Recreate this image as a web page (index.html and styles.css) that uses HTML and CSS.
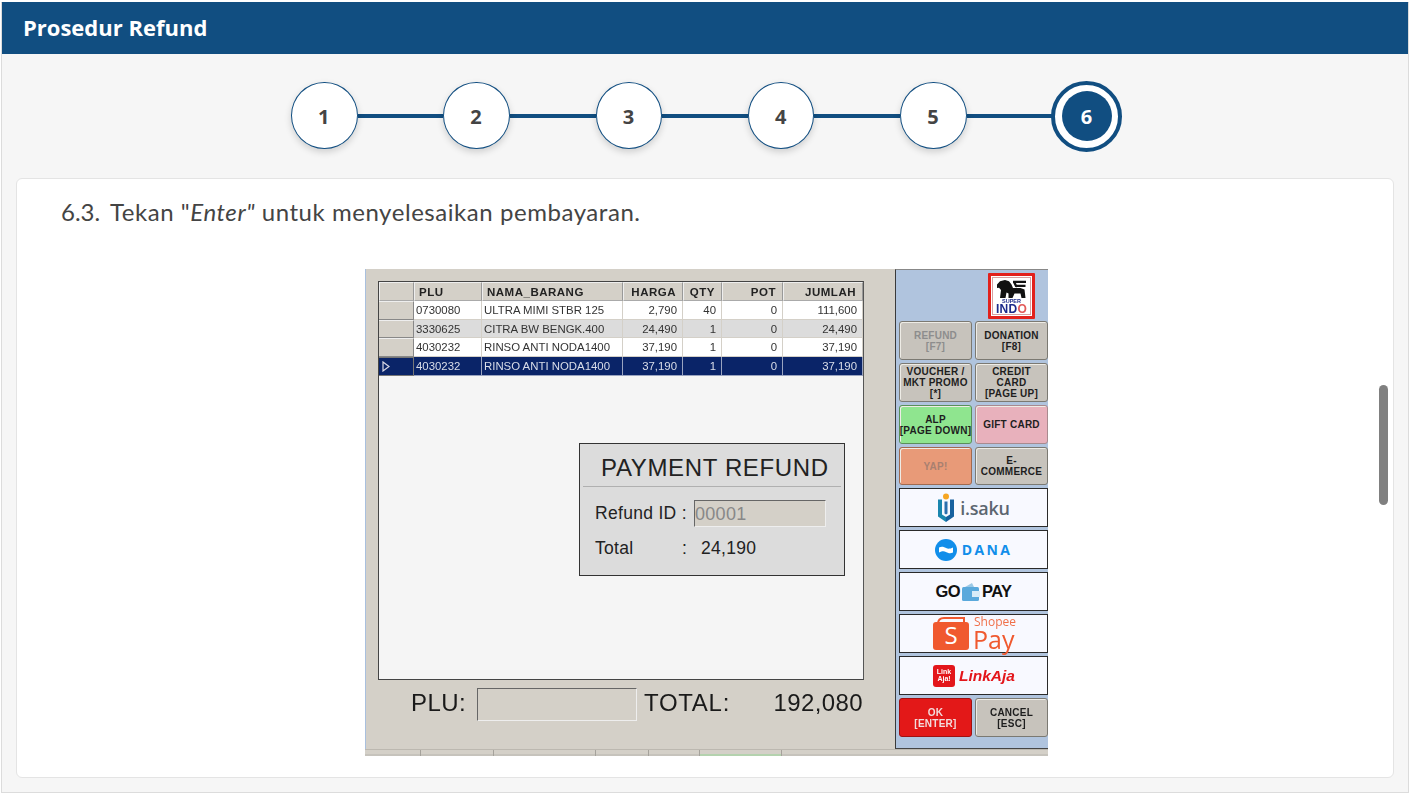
FILE: index.html
```html
<!DOCTYPE html>
<html lang="id">
<head>
<meta charset="utf-8">
<title>Prosedur Refund</title>
<link rel="stylesheet" href="styles.css">
</head>
<body>
<div class="panel">
  <header class="head">Prosedur Refund</header>
  <div class="steps">
    <div class="step">1</div><div class="link"></div>
    <div class="step">2</div><div class="link"></div>
    <div class="step">3</div><div class="link"></div>
    <div class="step">4</div><div class="link"></div>
    <div class="step">5</div><div class="link"></div>
    <div class="step current"><span>6</span></div>
  </div>
  <main class="card">
    <p class="lead"><span class="num">6.3.</span>Tekan "<em>Enter"</em> untuk menyelesaikan pembayaran.</p>
    <div class="shot">
      <div class="shot-main">
      <div class="pos">
        <div class="grid">
          <div class="row hdr">
            <div class="c ind"></div><div class="c">PLU</div><div class="c">NAMA_BARANG</div><div class="c r">HARGA</div><div class="c r">QTY</div><div class="c r">POT</div><div class="c r">JUMLAH</div>
          </div>
          <div class="row">
            <div class="c ind"></div><div class="c">0730080</div><div class="c">ULTRA MIMI STBR 125</div><div class="c r">2,790</div><div class="c r">40</div><div class="c r">0</div><div class="c r">111,600</div>
          </div>
          <div class="row alt">
            <div class="c ind"></div><div class="c">3330625</div><div class="c">CITRA BW BENGK.400</div><div class="c r">24,490</div><div class="c r">1</div><div class="c r">0</div><div class="c r">24,490</div>
          </div>
          <div class="row">
            <div class="c ind"></div><div class="c">4030232</div><div class="c">RINSO ANTI NODA1400</div><div class="c r">37,190</div><div class="c r">1</div><div class="c r">0</div><div class="c r">37,190</div>
          </div>
          <div class="row sel">
            <div class="c ind"><svg class="arrow" width="8" height="11" viewBox="0 0 8 11"><path d="M1 1l6 4.500-6 4.500z" fill="#0a2468" stroke="#d8d8e4" stroke-width="1.200"/></svg></div><div class="c">4030232</div><div class="c">RINSO ANTI NODA1400</div><div class="c r">37,190</div><div class="c r">1</div><div class="c r">0</div><div class="c r">37,190</div>
          </div>
        </div>
        <div class="dialog">
          <div class="d-title">PAYMENT REFUND</div>
          <div class="d-body">
            <div class="d-row"><span class="d-lbl">Refund ID :</span><span class="d-input">00001</span></div>
            <div class="d-row d-total"><span class="d-lbl2">Total</span><span class="d-colon">:</span><span>24,190</span></div>
          </div>
        </div>
        <div class="totals">
          <span class="t-plu">PLU:</span><span class="t-input"></span><span class="t-lbl">TOTAL:</span><span class="t-val">192,080</span>
        </div>
      </div>
      <aside class="side">
        <div class="logo-wrap">
          <div class="indo">
            <svg class="lion" width="30" height="18" viewBox="0 0 30 20" preserveAspectRatio="none"><path d="M0 5L3 1.500 8 0l4 1.500L14.500 5l1.500 4h7.500l4 1.500 1 9.500h-4l-1-5h-6l-2 5h-4v-5l-2-1-1 6H3l1-9-2-2.500-2 .5z" fill="#111"/><path d="M16 2h13M17 2l2 4.500h9.500M19 6.500l1 1" fill="none" stroke="#111" stroke-width="2.400"/></svg>
            <span class="super">SUPER</span>
            <span class="indo-t">IND<span class="indo-o">O</span></span>
          </div>
        </div>
        <div class="btns">
          <div class="btn off">REFUND<br>[F7]</div>
          <div class="btn">DONATION<br>[F8]</div>
          <div class="btn">VOUCHER /<br>MKT PROMO<br>[*]</div>
          <div class="btn">CREDIT<br>CARD<br>[PAGE UP]</div>
          <div class="btn green">ALP<br>[PAGE DOWN]</div>
          <div class="btn pink">GIFT CARD</div>
          <div class="btn salmon">YAP!</div>
          <div class="btn">E-<br>COMMERCE</div>
          <div class="pay isk">
            <svg width="18" height="30" viewBox="0 0 18 30"><circle cx="9" cy="3.500" r="3" fill="#f6a623"/><path d="M5 6.500H1v17l8 5.500v-5l-4-2.500z" fill="#1a86ae"/><path d="M13 6.500h4v17l-8 5.500v-5l4-2.500z" fill="#17619f"/><path d="M7.500 8.500h3v12l-1.500 1-1.500-1z" fill="#2a6fae"/></svg>
            <span class="isaku">i.saku</span>
          </div>
          <div class="pay dn">
            <svg width="22" height="22" viewBox="0 0 22 22"><circle cx="11" cy="11" r="11" fill="#118eea"/><path d="M4 8.500c3-1.500 5-.5 7 .5s4 1 7-.5v5c-3 1.500-5 .5-7-.5s-4-1-7 .5z" fill="#fff"/></svg>
            <span class="dana">DANA</span>
          </div>
          <div class="pay gp">
            <span class="gopay">GO</span>
            <svg width="18" height="20" viewBox="0 0 18 20"><path d="M3 5l7-4 2 4z" fill="#9cc9e6"/><rect x="0" y="5" width="17" height="14" rx="1.500" fill="#5aa9dc"/><rect x="10" y="9" width="8" height="6" fill="#d9ecf8"/></svg>
            <span class="gopay">PAY</span>
          </div>
          <div class="pay spay">
            <svg width="36" height="33" viewBox="0 0 36 33"><path d="M5 7C5 2 8 1 11 1h20v6" fill="none" stroke="#f0592f" stroke-width="2"/><rect x="0" y="5" width="36" height="28" rx="3" fill="#f0592f"/><text x="18" y="27" text-anchor="middle" class="s-letter">S</text></svg>
            <div class="spay-t"><span class="sh">Shopee</span><span class="pa">Pay</span></div>
          </div>
          <div class="pay la-pay">
            <span class="la-box">Link<br>Aja!</span><span class="la">LinkAja</span>
          </div>
          <div class="btn red">OK<br>[ENTER]</div>
          <div class="btn">CANCEL<br>[ESC]</div>
        </div>
      </aside>
      </div>
      <div class="status">
        <i class="w1"></i><i class="w2"></i><i class="w3"></i><i class="w4"></i><i class="w5"></i><i class="w6"></i><i class="w7"></i>
      </div>
    </div>
  </main>
  <div class="thumb"></div>
</div>
</body>
</html>
```

FILE: styles.css
```css
* { box-sizing: border-box; }
html, body { margin: 0; padding: 0; height: 100%; overflow: hidden; background: #fff; }
body { padding: 2px 0 1px 1px; }

.panel {
  position: relative;
  width: 1408px;
  height: 791px;
  background: #f6f6f6;
  border: 1px solid #dcdcdc;
  border-top-color: #b9c3cc;
  display: flex;
  flex-direction: column;
}
.head {
  height: 52px;
  margin-top: -1px;
  flex: none;
  background: #114e81;
  color: #fff;
  font: 700 22px/50px "Open Sans", sans-serif;
  padding-left: 21px;
}
.steps {
  flex: none;
  height: 124px;
  display: flex;
  align-items: center;
  padding-left: 289px;
}
.step {
  flex: none;
  width: 66.500px;
  height: 67px;
  margin-bottom: 2px;
  padding: 3px 1px 0 0;
  border-radius: 50%;
  background: #fff;
  border: 1.5px solid #114e81;
  box-shadow: 0 3px 7px rgba(0,0,0,.16);
  color: #444;
  font: 700 20px/1 "Open Sans", sans-serif;
  display: flex;
  align-items: center;
  justify-content: center;
  position: relative;
  z-index: 1;
}
.link { flex: none; width: 85.800px; height: 4px; margin-bottom: 1px; background: #114e81; }
.current {
  width: 71px;
  height: 71px;
  margin-bottom: 0;
  border: 4px solid #114e81;
  box-shadow: none;
  padding: 0;
  margin-left: -1px;
}
.current span {
  width: 50px;
  height: 50px;
  padding: 1px 1px 0 0;
  border-radius: 50%;
  background: #114e81;
  color: #fff;
  display: flex;
  align-items: center;
  justify-content: center;
}

.card {
  flex: none;
  margin-left: 14px;
  width: 1378px;
  height: 600px;
  background: #fff;
  border: 1px solid #e4e4e4;
  border-radius: 6px;
  display: flex;
  flex-direction: column;
}
.lead {
  margin: 20px 0 0 44px;
  font: 400 24px/26px Lato, sans-serif;
  letter-spacing: .55px;
  color: #444;
  height: 27px;
  white-space: nowrap;
}
.num { display: inline-block; width: 49px; letter-spacing: 0; }
.lead em { font-style: italic; }

.shot {
  margin: 43px 0 0 348px;
  width: 683px;
  height: 487px;
  display: flex;
  flex-direction: column;
  filter: blur(.4px);
  font-family: "Liberation Sans", Arial, sans-serif;
  overflow: hidden;
}
.shot-main { flex: none; height: 480px; display: flex; }
.pos {
  position: relative;
  width: 530px;
  background: #d4d0c8;
  border-left: 1px solid #a9c0de;
  display: flex;
  flex-direction: column;
  padding: 12px 0 0 12px;
}
.grid {
  flex: none;
  width: 486px;
  height: 399px;
  background: #f5f5f5;
  border: 1px solid #444;
  border-right-color: #555;
}
.row {
  display: grid;
  grid-template-columns: 35px 68px 141px 60px 39px 61px 80px;
  height: 18.700px;
  font-size: 11.400px;
  line-height: 18px;
  color: #333;
  background: #fff;
}
.c {
  padding: 0 2px;
  border-right: 1px solid #d4d0c8;
  border-bottom: 1px solid #d4d0c8;
  white-space: nowrap;
  overflow: hidden;
}
.r { text-align: right; padding-right: 5px; }
.ind { background: #d4d0c8; border-right: 1px solid #888; border-bottom: 1px solid #888; border-top: 1px solid #eee; }
.hdr { background: #d4d0c8; font-weight: 700; color: #222; height: 19px; font-size: 11.500px; letter-spacing: .5px; }
.hdr .c { border-top: 1px solid #eee; border-left: 1px solid #eee; border-bottom-color: #aaa; border-right-color: #999; padding-left: 4px; }
.hdr .r { padding-right: 6px; }
.alt { background: #dcdcdc; }
.sel { background: #0a2468; color: #d9dde8; }
.sel .c { border-color: #9aa4c0; }
.sel .ind { border-color: #777; padding: 3px 0 0 3px; background: #0a2468; }
.arrow { display: block; }

.dialog {
  position: absolute;
  left: 213px;
  top: 174px;
  width: 266px;
  height: 133px;
  background: #dcdcdc;
  border: 1px solid #333;
  padding: 0 3px;
  color: #222;
}
.d-title {
  height: 43px;
  font-size: 24px;
  line-height: 48px;
  letter-spacing: .65px;
  padding-left: 18px;
  border-bottom: 1px solid #b0b0b0;
  white-space: nowrap;
}
.d-body { padding: 13px 0 0 12px; font-size: 17.500px; letter-spacing: .3px; }
.d-row { display: flex; align-items: center; }
.d-lbl { width: 99px; white-space: nowrap; }
.d-input {
  width: 132px;
  height: 27px;
  background: #d4d0c8;
  border: 1px solid #eee;
  border-top-color: #666;
  border-left-color: #666;
  color: #888;
  line-height: 27px;
  font-size: 18px;
}
.d-total { margin-top: 11px; }
.d-lbl2 { width: 87px; }
.d-colon { width: 19px; }

.totals {
  flex: none;
  height: 33px;
  margin-top: 8px;
  display: flex;
  align-items: center;
  font-size: 24px;
  color: #1a1a1a;
  letter-spacing: .7px;
}
.totals span { padding-bottom: 3px; }
.t-plu { width: 66px; margin-left: 33px; white-space: nowrap; letter-spacing: .4px; }
.t-input {
  width: 160px;
  height: 33px;
  border: 1px solid #eee;
  border-top-color: #666;
  border-left-color: #666;
}
.t-lbl { width: 127px; margin-left: 7px; }
.t-val { width: 92px; text-align: right; letter-spacing: .4px; }

.status {
  flex: none;
  height: 7px;
  background: linear-gradient(#d4d0c8 0 4px, #c6c3bc 4px);
  border-top: 1px solid #bcb8b0;
  display: flex;
}
.status i { display: block; height: 100%; border-right: 1px solid #a5a29b; }
.w1 { width: 56px; }
.w2 { width: 73px; }
.w3 { width: 102px; }
.w4 { width: 53px; }
.w5 { width: 51px; }
.w6 { width: 82px; background: linear-gradient(#d4d0c8 0 4px, #b4d2ae 4px); }
.w7 { flex: 1; border: 0 !important; }

.side {
  width: 153px;
  height: 480px;
  background: #b0c4de;
  border-left: 1px solid #3a3a3a;
  border-top: 1px solid #888;
  border-bottom: 1px solid #444;
  padding: 0 0 0 3px;
}
.logo-wrap { height: 51px; display: flex; justify-content: flex-end; padding: 3px 13px 0 0; }
.indo {
  position: relative;
  width: 47px;
  height: 46px;
  background: #fff;
  border: 3px solid #e2211c;
  border-radius: 1px;
  box-shadow: inset 0 0 0 1px #fff, inset 0 0 0 2px #d8a0a0;
  display: flex;
  flex-direction: column;
  align-items: center;
  padding-top: 4px;
}
.lion { flex: none; }
.super { font: 700 5.500px/6px "Liberation Sans", sans-serif; color: #1c2a8a; }
.indo-t { font: 700 12px/11px "Liberation Sans", sans-serif; color: #1c2a8a; letter-spacing: .3px; }
.indo-o { color: #e25a5a; }

.btns {
  display: grid;
  grid-template-columns: 73px 73px;
  column-gap: 3px;
  grid-template-rows: 39px 39px 39px 38px;
  grid-auto-rows: 39px;
  row-gap: 3px;
  width: 149px;
}
.btn {
  display: flex;
  align-items: center;
  justify-content: center;
  text-align: center;
  background: #c7c3bc;
  border: 1px solid #7b7972;
  border-radius: 3px;
  box-shadow: inset 1px 1px 0 #eeece6;
  font: 700 10px/11px "Liberation Sans", sans-serif;
  letter-spacing: .25px;
  color: #1e1e1e;
  white-space: nowrap;
}
.off { color: #8d8d8d; }
.green { background: #8fe58f; border-color: #5a8f5a; }
.pink { background: #e8b1bc; border-color: #a88a8f; }
.salmon { background: #e89a78; border-color: #a06a50; color: #a88070; }
.red { background: #e31818; border-color: #a01010; color: #f2dcdc; box-shadow: none; }

.pay {
  grid-column: 1 / span 2;
  background: #f8f9ff;
  border: 1px solid #2a2a2a;
  display: flex;
  align-items: center;
  justify-content: center;
  gap: 4px;
}
.isk { gap: 5px; }
.isaku { font: 600 18px/1 "Open Sans", sans-serif; color: #5c6670; letter-spacing: -.2px; }
.dn { gap: 5px; }
.dana { font: 700 14px/1 "Open Sans", sans-serif; color: #118eea; letter-spacing: 2.400px; }
.gp { gap: 2px; }
.gopay { font: 700 16.500px/1 "Liberation Sans", sans-serif; color: #111; letter-spacing: -.6px; }
.spay { gap: 4px; justify-content: flex-start; padding-left: 33px; }
.s-letter { font: 400 24px "Open Sans", sans-serif; fill: #fff; }
.spay-t { display: flex; flex-direction: column; }
.sh { font: 400 12px/11px "Open Sans", sans-serif; color: #f0704a; margin-left: 1px; }
.pa { font: 400 25px/25px "Open Sans", sans-serif; color: #f0592f; }
.la-pay { justify-content: flex-start; padding-left: 33px; }
.la-box {
  width: 22px;
  height: 22px;
  border-radius: 3px;
  background: #e3161b;
  color: #fff;
  font: 700 7px/7.500px "Liberation Sans", sans-serif;
  text-align: center;
  padding-top: 3px;
}
.la { font: italic 700 15.500px/1 "Liberation Sans", sans-serif; color: #e3161b; }

.thumb {
  position: absolute;
  left: 1377px;
  top: 382px;
  width: 9px;
  height: 120px;
  border-radius: 5px;
  background: #808080;
}
```
